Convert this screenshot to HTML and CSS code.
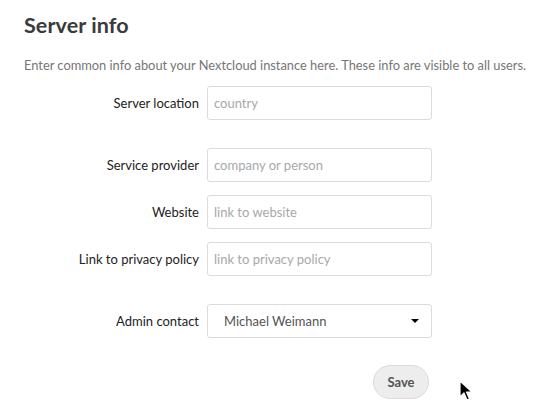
FILE: index.html
```html
<!DOCTYPE html>
<html>
<head>
<meta charset="utf-8">
<link rel="stylesheet" href="styles.css">
</head>
<body>
<div class="section">
  <h2 class="title">Server info</h2>
  <p class="desc">Enter common info about your Nextcloud instance here. These info are visible to all users.</p>
  <div class="form">
    <div class="row">
      <label class="label">Server location</label>
      <input class="field" type="text" placeholder="country">
    </div>
    <div class="row row-gap">
      <label class="label">Service provider</label>
      <input class="field" type="text" placeholder="company or person">
    </div>
    <div class="row">
      <label class="label">Website</label>
      <input class="field" type="text" placeholder="link to website">
    </div>
    <div class="row">
      <label class="label">Link to privacy policy</label>
      <input class="field" type="text" placeholder="link to privacy policy">
    </div>
    <div class="row row-gap">
      <label class="label">Admin contact</label>
      <div class="field select">
        <span class="select-value">Michael Weimann</span>
        <span class="caret"></span>
      </div>
    </div>
    <div class="actions">
      <button class="save">Save</button>
    </div>
  </div>
</div>
<svg class="cursor" width="14" height="22" viewBox="0 0 14 22">
  <path d="M1 1 L1 17 L5 13 L8 20 L10.5 19 L7.5 12 L13 12 Z" fill="#000" stroke="#fff" stroke-width="1.2" stroke-linejoin="round"/>
</svg>
</body>
</html>
```
FILE: styles.css
```css
html, body {
  margin: 0;
  padding: 0;
  background: #fff;
}
body {
  font-family: Lato, "Open Sans", sans-serif;
  position: relative;
  width: 538px;
  height: 412px;
  overflow: hidden;
}
.section {
  padding: 14px 24px 0 24px;
}
.title {
  margin: 0;
  font-size: 21.5px;
  font-weight: 700;
  color: #3a3a3a;
  line-height: 22px;
  letter-spacing: 0.1px;
}
.desc {
  margin: 21px 0 0 0;
  font-size: 12.85px;
  color: #767676;
  line-height: 16px;
  white-space: nowrap;
}
.form {
  width: 408px;
  margin-top: 13px;
  display: flex;
  flex-direction: column;
  gap: 13px;
}
.row {
  display: flex;
  align-items: center;
}
.row-gap {
  margin-top: 15px;
}
.label {
  width: 175px;
  text-align: right;
  padding-right: 8px;
  font-size: 13px;
  color: #222;
}
.field {
  box-sizing: border-box;
  width: 225px;
  height: 34px;
  border: 1px solid #dbdbdb;
  border-radius: 3px;
  padding: 0 6px;
  font-family: inherit;
  font-size: 13px;
  color: #222;
  background: #fff;
  outline: none;
}
.field::placeholder {
  color: #a8a8a8;
}
.select {
  display: flex;
  align-items: center;
  justify-content: space-between;
  padding: 0 12px 0 16px;
}
.select-value {
  color: #555;
}
.caret {
  width: 0;
  height: 0;
  border-left: 4px solid transparent;
  border-right: 4px solid transparent;
  border-top: 4px solid #000;
}
.actions {
  display: flex;
  justify-content: flex-end;
  padding-right: 3px;
  margin-top: 14px;
}
.save {
  width: 56px;
  height: 34px;
  border: 1px solid #dbdbdb;
  border-radius: 17px;
  background: #ededed;
  font-family: inherit;
  font-size: 13px;
  font-weight: 700;
  color: #555;
  padding: 0;
}
.cursor {
  position: absolute;
  left: 459px;
  top: 380px;
}
```
